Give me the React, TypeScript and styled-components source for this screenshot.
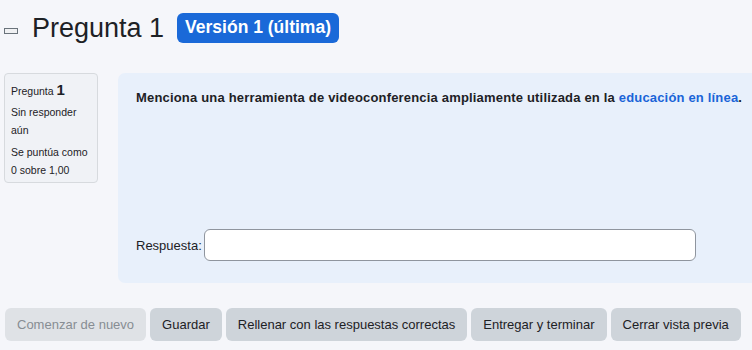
import styled, { createGlobalStyle } from "styled-components";

const GlobalStyle = createGlobalStyle`
  html, body {
    margin: 0;
    padding: 0;
    background-color: #f5f6fa;
    overflow: hidden;
  }
  body {
    font-family: "Liberation Sans", Arial, sans-serif;
    color: #1d2125;
  }
`;

const Page = styled.div`
  width: 752px;
  height: 350px;
  padding: 12px 0 0 4px;
  box-sizing: border-box;
`;

const Header = styled.div`
  display: flex;
  align-items: center;
  height: 32px;
`;

const CollapseIcon = styled.span`
  display: inline-block;
  width: 12px;
  height: 4px;
  border: 1px solid #6a737b;
  background-color: #f0f1f3;
  margin: 6px 14px 0 0;
`;

const Title = styled.h2`
  margin: 0;
  font-size: 27px;
  font-weight: 400;
`;

const Badge = styled.span`
  margin-left: 13px;
  background-color: #1a69d8;
  color: #fff;
  font-size: 17.5px;
  font-weight: 700;
  padding: 4px 8px 5px;
  border-radius: 6px;
`;

const Main = styled.div`
  display: flex;
  gap: 20px;
  margin-top: 29px;
  margin-right: -12px;
  align-items: flex-start;
`;

const Info = styled.div`
  width: 94px;
  height: 110px;
  box-sizing: border-box;
  border: 1px solid #d7dade;
  border-radius: 4px;
  background-color: #f0f2f6;
  padding: 7px 6px;
  font-size: 10.5px;
  line-height: 18px;
`;

const InfoTitle = styled.div`
  margin-bottom: 3px;
  b {
    font-size: 15px;
  }
`;

const InfoText = styled.div`
  margin-bottom: 4px;
`;

const Content = styled.div`
  flex: 1;
  height: 210px;
  box-sizing: border-box;
  background-color: #e8f0fb;
  border-radius: 7px;
  padding: 16px 18px 22px;
  display: flex;
  flex-direction: column;
  justify-content: space-between;
`;

const Question = styled.p`
  margin: 0;
  font-size: 13px;
  font-weight: 700;
  letter-spacing: 0.18px;
  line-height: 18px;
  a {
    color: #1a64d8;
    text-decoration: none;
  }
`;

const AnswerRow = styled.label`
  display: flex;
  align-items: center;
  gap: 2px;
  font-size: 13px;
`;

const AnswerInput = styled.input`
  width: 492px;
  height: 32px;
  box-sizing: border-box;
  border: 1px solid #8f959e;
  border-radius: 6px;
  background-color: #fff;
  outline: none;
`;

const Buttons = styled.div`
  display: flex;
  gap: 4px;
  margin-top: 25px;
  padding-left: 1px;
`;

const Button = styled.button<{ disabled?: boolean }>`
  height: 33px;
  padding: 0 12px;
  border: none;
  border-radius: 6px;
  font-family: inherit;
  font-size: 13px;
  background-color: ${(p) => (p.disabled ? "#dfe2e6" : "#ced4da")};
  color: ${(p) => (p.disabled ? "#878d93" : "#1d2125")};
`;

const buttons = [
  { label: "Comenzar de nuevo", disabled: true },
  { label: "Guardar" },
  { label: "Rellenar con las respuestas correctas" },
  { label: "Entregar y terminar" },
  { label: "Cerrar vista previa" },
];

function App() {
  return (
    <>
      <GlobalStyle />
      <Page>
        <Header>
          <CollapseIcon />
          <Title>Pregunta 1</Title>
          <Badge>Versión 1 (última)</Badge>
        </Header>
        <Main>
          <Info>
            <InfoTitle>
              Pregunta <b>1</b>
            </InfoTitle>
            <InfoText>Sin responder aún</InfoText>
            <InfoText>Se puntúa como 0 sobre 1,00</InfoText>
          </Info>
          <Content>
            <Question>
              Menciona una herramienta de videoconferencia ampliamente utilizada en la{" "}
              <a href="#">educación en línea</a>.
            </Question>
            <AnswerRow>
              Respuesta:
              <AnswerInput type="text" />
            </AnswerRow>
          </Content>
        </Main>
        <Buttons>
          {buttons.map((b) => (
            <Button key={b.label} disabled={b.disabled}>
              {b.label}
            </Button>
          ))}
        </Buttons>
      </Page>
    </>
  );
}

export default App;
